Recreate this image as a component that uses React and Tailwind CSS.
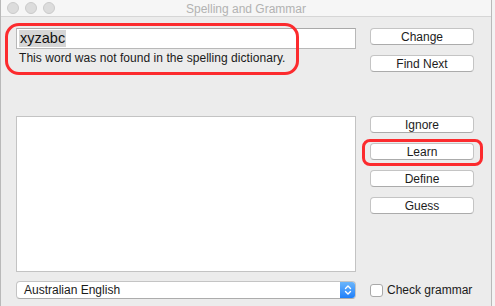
import React from "react";

function Btn({ children, className = "" }) {
  return (
    <div
      className={
        "h-[17px] w-full rounded-[4px] bg-white border border-[#c4c4c4] border-b-[#ababab] flex items-center justify-center text-[12px] leading-none text-[#1c1c1c] " +
        className
      }
    >
      {children}
    </div>
  );
}

export default function App() {
  return (
    <div
      className="relative w-[495px] h-[306px] overflow-hidden bg-[#f3f3f3]"
      style={{ fontFamily: '"Liberation Sans", Arial, sans-serif' }}
    >
      <div className="w-[492px] h-[306px] bg-[#ececec] border-l border-r border-[#b9b9b9] flex flex-col">
        {/* title bar */}
        <div className="relative h-[17px] shrink-0 bg-[#f6f6f6] border-b border-[#d6d6d6] flex items-center justify-center">
          <div className="absolute left-[6px] top-[2px] flex gap-[6px]">
            <div className="w-[12px] h-[12px] rounded-full bg-[#dcdcdc] border border-[#cbcbcb]" />
            <div className="w-[12px] h-[12px] rounded-full bg-[#dcdcdc] border border-[#cbcbcb]" />
            <div className="w-[12px] h-[12px] rounded-full bg-[#dcdcdc] border border-[#cbcbcb]" />
          </div>
          <span className="text-[12px] leading-none text-[#b2b2b2] pt-[1px]">Spelling and Grammar</span>
        </div>

        {/* body */}
        <div className="flex pl-[15px] pt-[11px]">
          <div className="w-[340px] flex flex-col">
            <div className="h-[21px] bg-white border border-[#b8b8b8] border-t-[#a9a9a9] flex items-center pl-[2px]">
              <span className="bg-[#d6d6d6] h-[17px] px-[1px] flex items-center text-[14.5px] leading-none text-[#111]">
                xyzabc
              </span>
            </div>
            <div className="mt-[3px] pl-[3px] text-[12px] leading-[13px] tracking-[0.05px] text-[#1a1a1a]">
              This word was not found in the spelling dictionary.
            </div>
            <div className="mt-[51px] h-[156px] bg-white border border-[#c3c3c3]" />
          </div>
          <div className="ml-[14px] w-[104px] flex flex-col">
            <Btn>Change</Btn>
            <Btn className="mt-[10px]">Find Next</Btn>
            <Btn className="mt-[44px]">Ignore</Btn>
            <Btn className="mt-[10px]">Learn</Btn>
            <Btn className="mt-[10px]">Define</Btn>
            <Btn className="mt-[10px]">Guess</Btn>
          </div>
        </div>

        {/* bottom row */}
        <div className="flex items-center pl-[15px] mt-[9px]">
          <div className="w-[340px] h-[18px] rounded-[4px] bg-white border border-[#c4c4c4] border-b-[#acacac] flex items-stretch overflow-hidden">
            <div className="flex-1 pl-[7px] flex items-center text-[12px] leading-none text-[#1a1a1a]">
              Australian English
            </div>
            <div className="w-[15px] bg-gradient-to-b from-[#6ab5fb] to-[#1c7ffa] flex items-center justify-center">
              <svg width="8" height="12" viewBox="0 0 8 12" fill="none" stroke="white" strokeWidth="1.4" strokeLinecap="round" strokeLinejoin="round">
                <path d="M1.5 4.5 L4 2 L6.5 4.5" />
                <path d="M1.5 7.5 L4 10 L6.5 7.5" />
              </svg>
            </div>
          </div>
          <div className="ml-[14px] flex items-center">
            <div className="w-[13px] h-[13px] rounded-[3px] bg-white border border-[#a9a9a9]" />
            <span className="ml-[4px] text-[12px] leading-none text-[#1a1a1a]">Check grammar</span>
          </div>
        </div>
      </div>

      {/* red annotation boxes */}
      <div className="absolute left-[5px] top-[23px] w-[294px] h-[52px] rounded-[14px] border-[3px] border-[#fc2b2e]" />
      <div className="absolute left-[362px] top-[139px] w-[121px] h-[27px] rounded-[8px] border-[3px] border-[#fc2b2e]" />
    </div>
  );
}
